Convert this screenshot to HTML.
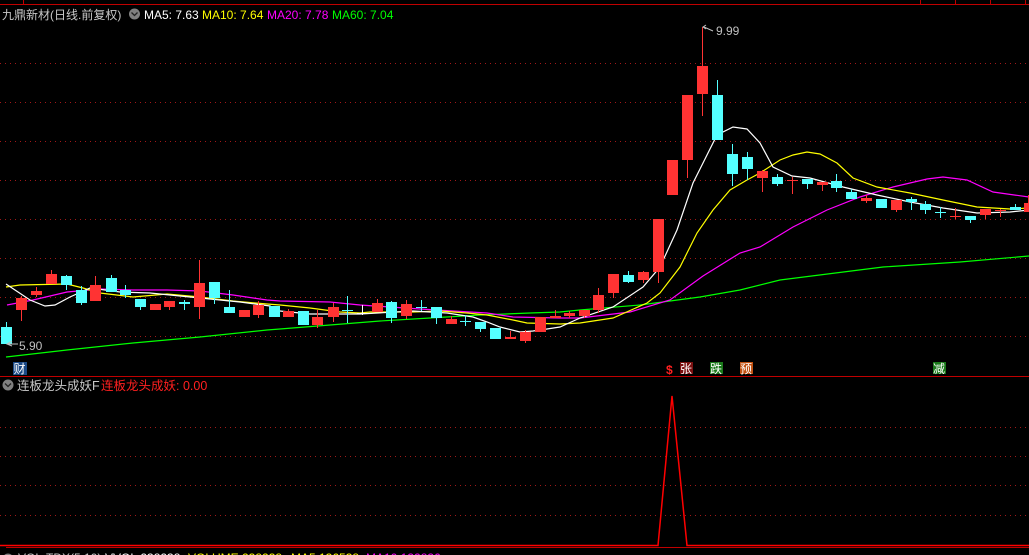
<!DOCTYPE html>
<html><head><meta charset="utf-8"><style>
html,body{margin:0;padding:0;background:#000;width:1029px;height:555px;overflow:hidden}
svg{display:block}
text{font-family:"Liberation Sans","Noto Sans CJK SC",sans-serif}
</style></head><body>
<svg width="1029" height="555" viewBox="0 0 1029 555" xmlns="http://www.w3.org/2000/svg">
<rect width="1029" height="555" fill="#000"/>
<line x1="0" y1="4.5" x2="1029" y2="4.5" stroke="#c00000" stroke-width="1"/>
<g stroke="#c00000"><line x1="23.5" y1="0" x2="23.5" y2="4"/><line x1="920.5" y1="0" x2="920.5" y2="4"/><line x1="955.5" y1="0" x2="955.5" y2="4"/><line x1="990.5" y1="0" x2="990.5" y2="4"/><line x1="1025.5" y1="0" x2="1025.5" y2="4"/></g>
<line x1="0" y1="376.5" x2="1029" y2="376.5" stroke="#c00000"/>
<line x1="6" y1="547.5" x2="1029" y2="547.5" stroke="#c00000"/>
<g stroke="#a01818" stroke-dasharray="1 4" stroke-width="1">
<line x1="0" y1="63.5" x2="1029" y2="63.5"/><line x1="0" y1="102.5" x2="1029" y2="102.5"/><line x1="0" y1="141.5" x2="1029" y2="141.5"/><line x1="0" y1="180.5" x2="1029" y2="180.5"/><line x1="0" y1="219.5" x2="1029" y2="219.5"/><line x1="0" y1="258.5" x2="1029" y2="258.5"/><line x1="0" y1="297.5" x2="1029" y2="297.5"/><line x1="0" y1="336.5" x2="1029" y2="336.5"/>
<line x1="0" y1="427.5" x2="1029" y2="427.5"/><line x1="0" y1="456.5" x2="1029" y2="456.5"/><line x1="0" y1="485.5" x2="1029" y2="485.5"/><line x1="0" y1="515.5" x2="1029" y2="515.5"/>
</g>
<g fill="none" stroke-width="1.2">
<polyline stroke="#00ff00" points="6,357 67,350 133,343 200,337 267,330 280,329 330,325 380,321 430,318 480,315 530,313 560,312 580,310 640,305 700,297 740,290 780,280 883,267 960,262 1029,256"/>
<polyline stroke="#ff00ff" points="7,305 33,300 67,292 100,289 133,290 167,290 200,291 233,295 267,300 280,301 330,302 360,305 390,307 420,309 453,311 487,313 513,317 560,318 580,318 630,312 670,300 703,276 740,253 760,247 793,227 827,210 860,197 893,187 927,179 943,177 967,180 993,192 1029,197"/>
<polyline stroke="#ffff00" points="6,287 20,285 67,284 83,288 100,293 133,297 167,294 200,297 233,301 267,304 280,305 310,308 340,312 360,313 370,312 413,312 440,311 467,313 487,315 513,320 527,323 560,324 580,323 613,318 647,303 660,293 680,267 697,233 713,210 730,190 747,180 760,173 780,160 793,155 807,152 820,154 837,163 853,178 877,187 910,193 943,200 977,207 1010,209 1029,208"/>
<polyline stroke="#ffffff" points="6,284 15,290 30,300 45,306 55,305 70,297 90,288 120,292 150,293 200,298 240,302 270,306 280,311 310,314 360,314 413,311 447,313 473,317 487,322 500,327 520,332 533,331 547,329 560,327 580,318 613,307 643,287 660,267 677,230 693,183 703,163 717,135 733,127 747,129 760,143 773,167 792,176 810,178 843,187 877,195 910,202 943,208 977,213 1010,212 1029,210"/>
</g>
<g shape-rendering="crispEdges">
<line x1="6.5" y1="322" x2="6.5" y2="344" stroke="#54ffff"/><rect x="1" y="327" width="11" height="17" fill="#54ffff"/>
<line x1="21.5" y1="296" x2="21.5" y2="321" stroke="#ff3333"/><rect x="16" y="298" width="11" height="12" fill="#ff3333"/>
<line x1="36.5" y1="287" x2="36.5" y2="297" stroke="#ff3333"/><rect x="31" y="291" width="11" height="4" fill="#ff3333"/>
<line x1="51.5" y1="270" x2="51.5" y2="284" stroke="#ff3333"/><rect x="46" y="274" width="11" height="10" fill="#ff3333"/>
<line x1="66.5" y1="275" x2="66.5" y2="290" stroke="#54ffff"/><rect x="61" y="276" width="11" height="9" fill="#54ffff"/>
<line x1="81.5" y1="286" x2="81.5" y2="305" stroke="#54ffff"/><rect x="76" y="290" width="11" height="13" fill="#54ffff"/>
<line x1="95.5" y1="276" x2="95.5" y2="301" stroke="#ff3333"/><rect x="90" y="285" width="11" height="16" fill="#ff3333"/>
<line x1="111.5" y1="275" x2="111.5" y2="292" stroke="#54ffff"/><rect x="106" y="278" width="11" height="14" fill="#54ffff"/>
<line x1="125.5" y1="285" x2="125.5" y2="298" stroke="#54ffff"/><rect x="120" y="290" width="11" height="5" fill="#54ffff"/>
<line x1="140.5" y1="299" x2="140.5" y2="310" stroke="#54ffff"/><rect x="135" y="299" width="11" height="8" fill="#54ffff"/>
<rect x="150" y="304" width="11" height="6" fill="#ff3333"/>
<line x1="169.5" y1="301" x2="169.5" y2="310" stroke="#ff3333"/><rect x="164" y="301" width="11" height="6" fill="#ff3333"/>
<line x1="184.5" y1="300" x2="184.5" y2="310" stroke="#54ffff"/><rect x="179" y="302" width="11" height="2" fill="#54ffff"/>
<line x1="199.5" y1="260" x2="199.5" y2="319" stroke="#ff3333"/><rect x="194" y="283" width="11" height="24" fill="#ff3333"/>
<line x1="214.5" y1="282" x2="214.5" y2="304" stroke="#54ffff"/><rect x="209" y="282" width="11" height="16" fill="#54ffff"/>
<line x1="229.5" y1="290" x2="229.5" y2="313" stroke="#54ffff"/><rect x="224" y="307" width="11" height="6" fill="#54ffff"/>
<rect x="239" y="310" width="11" height="7" fill="#ff3333"/>
<line x1="258.5" y1="301" x2="258.5" y2="318" stroke="#ff3333"/><rect x="253" y="305" width="11" height="10" fill="#ff3333"/>
<rect x="269" y="306" width="11" height="11" fill="#54ffff"/>
<line x1="288.5" y1="309" x2="288.5" y2="317" stroke="#ff3333"/><rect x="283" y="311" width="11" height="6" fill="#ff3333"/>
<rect x="298" y="311" width="11" height="14" fill="#54ffff"/>
<line x1="317.5" y1="310" x2="317.5" y2="328" stroke="#ff3333"/><rect x="312" y="317" width="11" height="8" fill="#ff3333"/>
<line x1="333.5" y1="303" x2="333.5" y2="322" stroke="#ff3333"/><rect x="328" y="307" width="11" height="10" fill="#ff3333"/>
<line x1="347.5" y1="296" x2="347.5" y2="323" stroke="#54ffff"/><rect x="342" y="310" width="11" height="1" fill="#54ffff"/>
<line x1="362.5" y1="305" x2="362.5" y2="315" stroke="#ffffff"/><rect x="357" y="313" width="11" height="1" fill="#ffffff"/>
<line x1="377.5" y1="299" x2="377.5" y2="312" stroke="#ff3333"/><rect x="372" y="303" width="11" height="9" fill="#ff3333"/>
<line x1="391.5" y1="301" x2="391.5" y2="323" stroke="#54ffff"/><rect x="386" y="302" width="11" height="16" fill="#54ffff"/>
<line x1="406.5" y1="300" x2="406.5" y2="319" stroke="#ff3333"/><rect x="401" y="304" width="11" height="12" fill="#ff3333"/>
<line x1="421.5" y1="300" x2="421.5" y2="311" stroke="#54ffff"/><rect x="416" y="307" width="11" height="1" fill="#54ffff"/>
<line x1="436.5" y1="307" x2="436.5" y2="324" stroke="#54ffff"/><rect x="431" y="307" width="11" height="11" fill="#54ffff"/>
<line x1="451.5" y1="316" x2="451.5" y2="324" stroke="#ff3333"/><rect x="446" y="319" width="11" height="5" fill="#ff3333"/>
<line x1="465.5" y1="315" x2="465.5" y2="326" stroke="#54ffff"/><rect x="460" y="321" width="11" height="1" fill="#54ffff"/>
<line x1="480.5" y1="322" x2="480.5" y2="332" stroke="#54ffff"/><rect x="475" y="322" width="11" height="7" fill="#54ffff"/>
<rect x="490" y="328" width="11" height="11" fill="#54ffff"/>
<line x1="510.5" y1="331" x2="510.5" y2="339" stroke="#ff3333"/><rect x="505" y="337" width="11" height="2" fill="#ff3333"/>
<line x1="525.5" y1="330" x2="525.5" y2="343" stroke="#ff3333"/><rect x="520" y="332" width="11" height="9" fill="#ff3333"/>
<rect x="535" y="317" width="11" height="15" fill="#ff3333"/>
<line x1="555.5" y1="310" x2="555.5" y2="318" stroke="#ff3333"/><rect x="550" y="316" width="11" height="2" fill="#ff3333"/>
<line x1="569.5" y1="311" x2="569.5" y2="318" stroke="#ff3333"/><rect x="564" y="313" width="11" height="3" fill="#ff3333"/>
<line x1="584.5" y1="310" x2="584.5" y2="318" stroke="#ff3333"/><rect x="579" y="310" width="11" height="6" fill="#ff3333"/>
<line x1="598.5" y1="288" x2="598.5" y2="313" stroke="#ff3333"/><rect x="593" y="295" width="11" height="15" fill="#ff3333"/>
<line x1="613.5" y1="274" x2="613.5" y2="298" stroke="#ff3333"/><rect x="608" y="274" width="11" height="19" fill="#ff3333"/>
<line x1="628.5" y1="271" x2="628.5" y2="283" stroke="#54ffff"/><rect x="623" y="275" width="11" height="7" fill="#54ffff"/>
<line x1="643.5" y1="271" x2="643.5" y2="283" stroke="#ff3333"/><rect x="638" y="272" width="11" height="8" fill="#ff3333"/>
<line x1="658.5" y1="219" x2="658.5" y2="283" stroke="#ff3333"/><rect x="653" y="219" width="11" height="53" fill="#ff3333"/>
<rect x="667" y="160" width="11" height="35" fill="#ff3333"/>
<line x1="687.5" y1="95" x2="687.5" y2="178" stroke="#ff3333"/><rect x="682" y="95" width="11" height="65" fill="#ff3333"/>
<line x1="702.5" y1="27" x2="702.5" y2="116" stroke="#ff3333"/><rect x="697" y="66" width="11" height="28" fill="#ff3333"/>
<line x1="717.5" y1="80" x2="717.5" y2="140" stroke="#54ffff"/><rect x="712" y="95" width="11" height="45" fill="#54ffff"/>
<line x1="732.5" y1="144" x2="732.5" y2="186" stroke="#54ffff"/><rect x="727" y="154" width="11" height="20" fill="#54ffff"/>
<line x1="747.5" y1="152" x2="747.5" y2="180" stroke="#54ffff"/><rect x="742" y="157" width="11" height="12" fill="#54ffff"/>
<line x1="762.5" y1="170" x2="762.5" y2="192" stroke="#ff3333"/><rect x="757" y="171" width="11" height="7" fill="#ff3333"/>
<line x1="777.5" y1="174" x2="777.5" y2="186" stroke="#54ffff"/><rect x="772" y="177" width="11" height="7" fill="#54ffff"/>
<line x1="792.5" y1="177" x2="792.5" y2="194" stroke="#ff3333"/><rect x="787" y="180" width="11" height="1" fill="#ff3333"/>
<line x1="807.5" y1="179" x2="807.5" y2="189" stroke="#54ffff"/><rect x="802" y="179" width="11" height="5" fill="#54ffff"/>
<line x1="822.5" y1="182" x2="822.5" y2="191" stroke="#ff3333"/><rect x="817" y="182" width="11" height="3" fill="#ff3333"/>
<line x1="836.5" y1="174" x2="836.5" y2="192" stroke="#54ffff"/><rect x="831" y="181" width="11" height="7" fill="#54ffff"/>
<line x1="851.5" y1="189" x2="851.5" y2="199" stroke="#54ffff"/><rect x="846" y="192" width="11" height="7" fill="#54ffff"/>
<line x1="866.5" y1="195" x2="866.5" y2="203" stroke="#ff3333"/><rect x="861" y="198" width="11" height="3" fill="#ff3333"/>
<rect x="876" y="199" width="11" height="9" fill="#54ffff"/>
<line x1="896.5" y1="200" x2="896.5" y2="212" stroke="#ff3333"/><rect x="891" y="200" width="11" height="10" fill="#ff3333"/>
<line x1="911.5" y1="197" x2="911.5" y2="210" stroke="#54ffff"/><rect x="906" y="199" width="11" height="3" fill="#54ffff"/>
<line x1="925.5" y1="201" x2="925.5" y2="214" stroke="#54ffff"/><rect x="920" y="204" width="11" height="6" fill="#54ffff"/>
<line x1="940.5" y1="207" x2="940.5" y2="218" stroke="#54ffff"/><rect x="935" y="212" width="11" height="1" fill="#54ffff"/>
<line x1="955.5" y1="208" x2="955.5" y2="219" stroke="#ff3333"/><rect x="950" y="216" width="11" height="1" fill="#ff3333"/>
<line x1="970.5" y1="216" x2="970.5" y2="223" stroke="#54ffff"/><rect x="965" y="216" width="11" height="4" fill="#54ffff"/>
<line x1="985.5" y1="209" x2="985.5" y2="219" stroke="#ff3333"/><rect x="980" y="209" width="11" height="6" fill="#ff3333"/>
<line x1="1000.5" y1="209" x2="1000.5" y2="217" stroke="#ff3333"/><rect x="995" y="210" width="11" height="1" fill="#ff3333"/>
<line x1="1015.5" y1="204" x2="1015.5" y2="210" stroke="#54ffff"/><rect x="1010" y="207" width="11" height="3" fill="#54ffff"/>
<line x1="1028.5" y1="195" x2="1028.5" y2="212" stroke="#ff3333"/><rect x="1024" y="203" width="11" height="9" fill="#ff3333"/>
</g>
<polyline points="12,341 7,344 12,346" fill="none" stroke="#c0c0c0"/><line x1="7" y1="344" x2="18" y2="344" stroke="#c0c0c0"/>
<text x="19" y="350" font-size="12" fill="#c0c0c0">5.90</text>
<polyline points="706,25 703,27 706,29" fill="none" stroke="#c0c0c0"/><line x1="704" y1="27" x2="713" y2="31" stroke="#c0c0c0"/>
<text x="716" y="35" font-size="12" fill="#c0c0c0">9.99</text>
<text x="2" y="19" font-size="12" fill="#c8c8c8">九鼎新材(日线.前复权)</text>
<circle cx="134.5" cy="14" r="5.5" fill="#808080"/><polyline points="131.5,12.5 134.5,15.5 137.5,12.5" fill="none" stroke="#222" stroke-width="1.3"/>
<text x="144" y="19" font-size="12" fill="#ffffff">MA5: 7.63</text>
<text x="202" y="19" font-size="12" fill="#ffff00">MA10: 7.64</text>
<text x="267" y="19" font-size="12" fill="#ff00ff">MA20: 7.78</text>
<text x="332" y="19" font-size="12" fill="#00ff00">MA60: 7.04</text>
<rect x="13" y="362" width="14" height="13" fill="#1c4a86"/><text x="13.5" y="373" font-size="12" fill="#fff">财</text>
<text x="666" y="374" font-size="12" fill="#ff2020" font-weight="bold">$</text>
<rect x="680" y="362" width="13" height="12" fill="#7a1010"/><text x="680" y="373" font-size="12" fill="#fff">张</text>
<rect x="710" y="362" width="13" height="12" fill="#1a7a1a"/><text x="710" y="373" font-size="12" fill="#fff">跌</text>
<rect x="740" y="362" width="13" height="12" fill="#c05010"/><text x="740" y="373" font-size="12" fill="#fff">预</text>
<rect x="933" y="362" width="13" height="12" fill="#1a7a1a"/><text x="933" y="373" font-size="12" fill="#fff">减</text>
<circle cx="8" cy="385" r="5.5" fill="#808080"/><polyline points="5,383.5 8,386.5 11,383.5" fill="none" stroke="#222" stroke-width="1.3"/>
<text x="17" y="390" font-size="12.5" fill="#c8c8c8">连板龙头成妖F</text>
<text x="101" y="390" font-size="12.5" fill="#ff2020">连板龙头成妖: 0.00</text>
<polyline points="0,545.5 658,545.5 672,396 687,545.5 1029,545.5" fill="none" stroke="#ff0000" stroke-width="1.5"/>
<circle cx="8" cy="559" r="5.5" fill="#808080"/>
<text x="18" y="562" font-size="12" fill="#c8c8c8">VOL-TDX(5,10)</text>
<text x="105" y="562" font-size="12" fill="#ffffff">VVOL:238238</text>
<text x="188" y="562" font-size="12" fill="#ffff00">VOLUME:238238</text>
<text x="291" y="562" font-size="12" fill="#ffff00">MA5:136538</text>
<text x="366" y="562" font-size="12" fill="#ff00ff">MA10:132836</text>
</svg>
</body></html>
